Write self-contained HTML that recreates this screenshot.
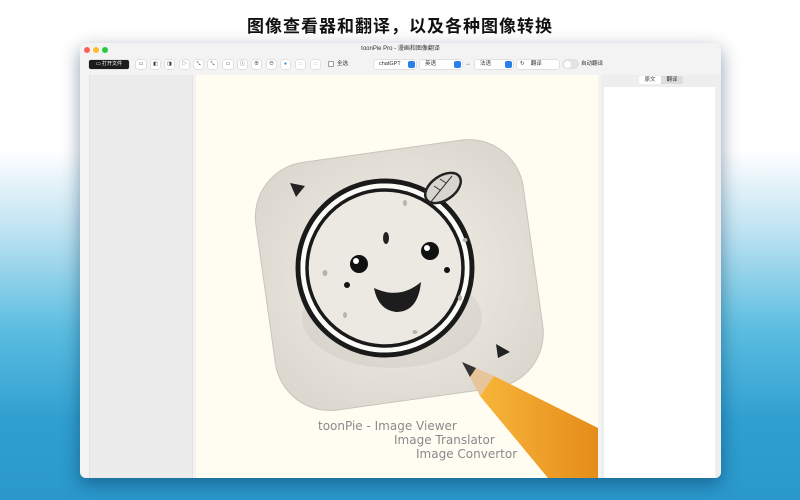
<!DOCTYPE html>
<html><head><meta charset="utf-8"><style>
*{margin:0;padding:0;box-sizing:border-box}
body{width:800px;height:500px;overflow:hidden;font-family:"Liberation Sans","Noto Sans CJK SC",sans-serif;
background:linear-gradient(180deg,#fff 0px,#fff 150px,#bfe3f1 230px,#5bbde0 330px,#2f9fd0 420px,#2a98cb 500px);position:relative}
.h1{position:absolute;top:12px;left:0;width:800px;text-align:center;font-size:17px;font-weight:bold;color:#111;letter-spacing:1px}
.win{position:absolute;left:80px;top:43px;width:641px;height:435px;background:#f3f3f3;border-radius:6px;overflow:hidden;box-shadow:0 6px 18px rgba(0,40,80,.45)}
.tb{position:absolute;left:0;top:0;width:641px;height:14px;text-align:center;font-size:6px;color:#333;line-height:12px}
.dot{position:absolute;top:4px;width:6px;height:6px;border-radius:50%}
.tool{position:absolute;top:14px;left:0;width:641px;height:18px}
.btn{position:absolute;top:3px;height:9px;border-radius:2px;background:#fff;box-shadow:0 0 0 .5px #ccc;font-size:5px;line-height:9px;text-align:center;color:#333}
.sel{position:absolute;top:3px;height:9px;background:#fff;border-radius:2px;box-shadow:0 0 0 .5px #ccc;font-size:5.5px;line-height:9px;color:#333;padding-left:5px}
.sel i{position:absolute;right:1px;top:1px;width:7px;height:7px;background:#2b7fe8;border-radius:2px}
.side{position:absolute;left:9px;top:32px;width:104px;height:403px;background:#ececec;border-left:1px solid #e2e2e2;border-right:1px solid #e2e2e2}
.img{position:absolute;left:116px;top:32px;width:402px;height:403px;background:#fffdf2;overflow:hidden}
.rp{position:absolute;left:521px;top:32px;width:120px;height:403px;background:#eee}
</style></head><body>
<div class="h1">图像查看器和翻译，以及各种图像转换</div>
<div class="win">
 <div class="tb">toonPie Pro - 漫画和图像翻译</div>
 <div class="dot" style="left:4px;background:#fe5f57"></div>
 <div class="dot" style="left:13px;background:#febc2e"></div>
 <div class="dot" style="left:22px;background:#28c840"></div>
 <div class="tool">
  <div class="btn" style="left:9px;width:40px;background:#1c1c1c;color:#fff">▭ 打开文件</div>
  <div class="btn" style="left:56px;width:10px">▭</div>
  <div class="btn" style="left:71px;width:9px">◧</div>
  <div class="btn" style="left:85px;width:9px">◨</div>
  <div class="btn" style="left:100px;width:9px">▷</div>
  <div class="btn" style="left:114px;width:9px">⤡</div>
  <div class="btn" style="left:128px;width:9px">⤡</div>
  <div class="btn" style="left:143px;width:10px">▭</div>
  <div class="btn" style="left:158px;width:9px">ⓘ</div>
  <div class="btn" style="left:172px;width:9px">⊕</div>
  <div class="btn" style="left:187px;width:9px">⊖</div>
  <div class="btn" style="left:201px;width:9px;color:#2a8bd8">●</div>
  <div class="btn" style="left:216px;width:9px;color:#bbb">▭</div>
  <div class="btn" style="left:231px;width:9px;color:#bbb">▭</div>
  <div style="position:absolute;left:248px;top:4px;width:6px;height:6px;border:.5px solid #999;border-radius:1px;background:#fff"></div>
  <div style="position:absolute;left:257px;top:3px;font-size:5.5px;line-height:9px;color:#333">全选</div>
  <div class="sel" style="left:294px;width:42px">chatGPT<i></i></div>
  <div class="sel" style="left:340px;width:42px">英语<i></i></div>
  <div style="position:absolute;left:385px;top:3px;font-size:6px;line-height:9px;color:#555">→</div>
  <div class="sel" style="left:395px;width:38px">法语<i></i></div>
  <div class="sel" style="left:437px;width:42px;padding-left:3px">↻ &nbsp;&nbsp;&nbsp;翻译</div>
  <div style="position:absolute;left:483px;top:3px;width:15px;height:8px;border-radius:4px;background:#e4e4e4;box-shadow:0 0 0 .5px #ccc"><div style="width:7px;height:7px;margin:.5px;border-radius:50%;background:#fff"></div></div>
  <div style="position:absolute;left:501px;top:3px;font-size:5.5px;line-height:9px;color:#333">自动翻译</div>
 </div>
 <div class="side"></div>
 <div class="img">
  <svg width="402" height="403" viewBox="196 75 402 403">
   <defs><radialGradient id="g" cx=".5" cy=".5" r=".6"><stop offset="0" stop-color="#f4f1ea"/><stop offset="1" stop-color="#dcd8cf"/></radialGradient>
   <linearGradient id="p" x1="0" y1="0" x2="1" y2="0"><stop offset="0" stop-color="#f7b53a"/><stop offset="1" stop-color="#e58c1a"/></linearGradient></defs>
   <g transform="rotate(-8 400 280)"><rect x="265" y="150" width="270" height="250" rx="55" fill="url(#g)" stroke="#c9c5bc"/></g>
   <ellipse cx="392" cy="318" rx="90" ry="50" fill="#bdb8ae" opacity=".25"/>
   <circle cx="385" cy="268" r="87" fill="#f8f8f5" stroke="#1a1a1a" stroke-width="5"/>
   <circle cx="385" cy="268" r="82" fill="none" stroke="#fbfbf8" stroke-width="5"/>
   <circle cx="385" cy="268" r="78" fill="#ece9e3" stroke="#1a1a1a" stroke-width="3.5"/>
   <ellipse cx="443" cy="188" rx="20" ry="12" transform="rotate(-35 443 188)" fill="#d8d5cf" stroke="#222" stroke-width="2.5"/>
   <path d="M430 203 L452 176 M440 190 l-6 -4 M446 183 l-6 -4" stroke="#333" stroke-width="1"/>
   <ellipse cx="386" cy="238" rx="3" ry="6" fill="#222"/>
   <circle cx="359" cy="264" r="9" fill="#111"/><circle cx="356" cy="261" r="3" fill="#fff"/>
   <circle cx="430" cy="251" r="9" fill="#111"/><circle cx="427" cy="248" r="3" fill="#fff"/>
   <circle cx="347" cy="285" r="3" fill="#111"/><circle cx="447" cy="270" r="3" fill="#111"/>
   <g fill="#b9b4aa"><ellipse cx="325" cy="273" rx="2.5" ry="3"/><ellipse cx="405" cy="203" rx="2" ry="3"/><ellipse cx="465" cy="240" rx="2.5" ry="2"/><ellipse cx="460" cy="298" rx="2" ry="3"/><ellipse cx="345" cy="315" rx="2" ry="3"/><ellipse cx="415" cy="332" rx="2.5" ry="2"/></g>
   <path d="M374 288 Q400 300 421 282 Q418 312 396 312 Q378 310 374 288Z" fill="#1d1d1d"/>
   <polygon points="290,183 305,186 296,197" fill="#222"/>
   <polygon points="496,344 510,352 498,358" fill="#222"/>
   <polygon points="462,362 494,376 480,396" fill="#e8c49a"/>
   <polygon points="462,362 476,368 470,377" fill="#333"/>
   <polygon points="494,376 598,428 598,478 548,478 480,396" fill="url(#p)"/>
   <text x="318" y="430" font-size="12" fill="#8a8a8a" font-family="DejaVu Sans">toonPie - Image Viewer</text>
   <text x="394" y="444" font-size="12" fill="#8a8a8a" font-family="DejaVu Sans">Image Translator</text>
   <text x="416" y="458" font-size="12" fill="#8a8a8a" font-family="DejaVu Sans">Image Convertor</text>
  </svg>
 </div>
 <div class="rp">
  <div style="position:absolute;left:38px;top:1px;width:44px;height:8px;background:#ddd;border-radius:2px;font-size:5.5px;line-height:8px;color:#333"><span style="display:inline-block;width:22px;background:#fff;border-radius:2px;text-align:center">原文</span><span style="display:inline-block;width:22px;text-align:center">翻译</span></div>
  <div style="position:absolute;left:3px;top:12px;width:111px;height:391px;background:#fff"></div>
 </div>
</div>
</body></html>
